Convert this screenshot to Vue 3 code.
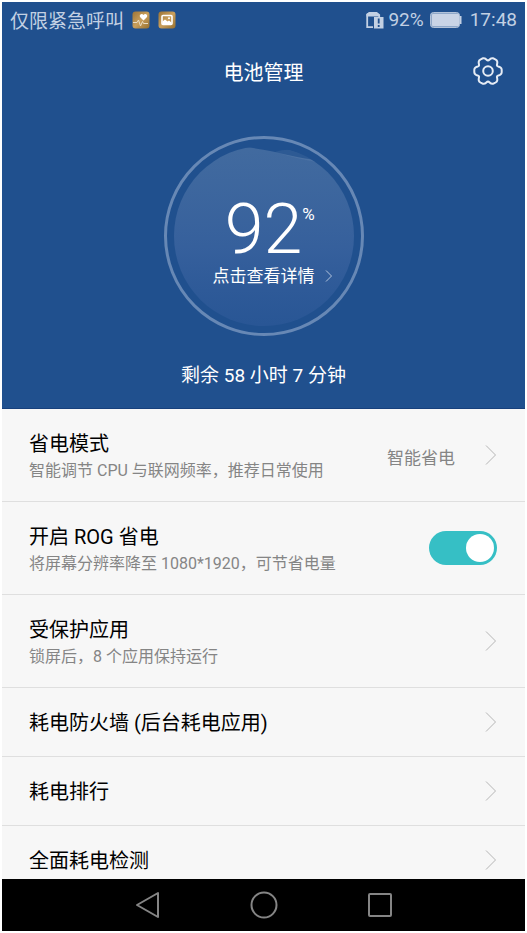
<script setup>
import { ref } from 'vue'

const level = ref(92)
const rogSaving = ref(true)

const rows = [
  { id: 'mode', title: '省电模式', note: '智能调节 CPU 与联网频率，推荐日常使用', value: '智能省电' },
  { id: 'rog', title: '开启 ROG 省电', note: '将屏幕分辨率降至 1080*1920，可节省电量', toggle: true },
  { id: 'protected', title: '受保护应用', note: '锁屏后，8 个应用保持运行' },
  { id: 'firewall', title: '耗电防火墙 (后台耗电应用)' },
  { id: 'ranking', title: '耗电排行' },
  { id: 'check', title: '全面耗电检测' },
]

// Six-lobed outline for the settings icon: broad lobes, narrow notches
function gearPath(cx, cy) {
  const points = []
  for (let deg = 0; deg < 360; deg += 3) {
    const a = (deg * Math.PI) / 180
    const r = 12.6 + 1.6 * Math.cos(6 * a) - 0.5 * Math.cos(12 * a)
    points.push(`${(cx + r * Math.cos(a)).toFixed(2)} ${(cy + r * Math.sin(a)).toFixed(2)}`)
  }
  return `M${points.join('L')}Z`
}
const gear = gearPath(16, 16)
</script>

<template>
  <div class="screen">
    <section class="hero">
      <div class="status">
        <span class="carrier">仅限紧急呼叫</span>
        <svg class="app-icon" width="18" height="18" viewBox="0 0 18 18" aria-hidden="true">
          <defs>
            <linearGradient id="gold" x1="0" y1="0" x2="1" y2="1">
              <stop offset="0" stop-color="#9c7436" />
              <stop offset="0.5" stop-color="#c99f5c" />
              <stop offset="1" stop-color="#96702f" />
            </linearGradient>
          </defs>
          <rect x="0.5" y="0.5" width="17" height="17" rx="3" fill="url(#gold)" />
          <path d="M11.5 9.5 8 6C6.8 4 9.8 1.800 11.500 4 13.200 1.800 16.200 4 15 6Z" fill="#fff" />
          <path d="M1 11.5H5L6.5 9 8.5 15 10.5 10.5 11.5 12.5H16" fill="none" stroke="#eadcc2" stroke-width="1" />
        </svg>
        <svg class="app-icon" width="18" height="18" viewBox="0 0 18 18" aria-hidden="true">
          <rect x="0.5" y="0.5" width="17" height="17" rx="3" fill="url(#gold)" />
          <rect x="4" y="4.5" width="10" height="9" rx="1" fill="none" stroke="#fff" stroke-width="1.6" />
          <path d="M4.5 12V10.5L7 8.5 9.5 10.5 11 9.5 13.5 11.5V13H4.5Z" fill="#fff" />
          <circle cx="11" cy="7.3" r="1" fill="#fff" />
        </svg>
        <span class="spacer"></span>
        <svg width="19" height="20" viewBox="0 0 19 20" aria-hidden="true">
          <path d="M8 17.200H2.200V4.500L4.500 3H11.500L14.200 5V7" fill="none" stroke="#c3d0e3" stroke-width="1.800" />
          <path d="M1.500 6.500V4L4.500 2H11.500L14 4.500V6.500Z" fill="#c3d0e3" />
          <rect x="9" y="7" width="9.500" height="11.500" fill="#c3d0e3" />
          <path d="M13.700 8.500V13.500M13.700 15V17" stroke="#20508e" stroke-width="1.800" />
        </svg>
        <span class="percent">{{ level }}%</span>
        <svg class="battery" width="32" height="16" viewBox="0 0 32 16" aria-hidden="true">
          <rect x="0.5" y="0.5" width="29" height="15" rx="3" fill="#8fa8c9" stroke="#b3c3da" />
          <rect x="2" y="2" width="27" height="12" rx="1" fill="#c9d4e6" />
          <path d="M30 4H31.5V12H30Z" fill="#c3d0e3" />
        </svg>
        <time>17:48</time>
      </div>

      <header class="bar">
        <h1>电池管理</h1>
        <button class="settings" type="button" aria-label="设置">
          <svg width="32" height="32" viewBox="0 0 32 32" fill="none" stroke="#e6ecf5" stroke-width="2" stroke-linejoin="round">
            <path :d="gear" />
            <circle cx="16" cy="16" r="4.8" />
          </svg>
        </button>
      </header>

      <button class="gauge" type="button">
        <svg class="dial" viewBox="0 0 200 200" aria-hidden="true">
          <defs>
            <linearGradient id="water" x1="0" y1="0" x2="0" y2="1">
              <stop offset="0" stop-color="#fff" stop-opacity="0.15" />
              <stop offset="0.55" stop-color="#9dabe0" stop-opacity="0.17" />
              <stop offset="1" stop-color="#6b82cc" stop-opacity="0.1" />
            </linearGradient>
            <clipPath id="bowl"><circle cx="100" cy="100" r="90" /></clipPath>
          </defs>
          <circle cx="100" cy="100" r="98.5" fill="none" stroke="#6788b5" stroke-width="3" />
          <g clip-path="url(#bowl)">
            <path d="M111 16Q121 13 126 14 140 17 152 26Q130 22 111 16Z" fill="#fff" opacity="0.06" />
            <path d="M0 30Q60 12 84 11.500Q92 12 111 16 130 21 152 24L200 45V200H0Z" fill="url(#water)" />
          </g>
        </svg>
        <span class="reading"><span class="number">{{ level }}</span><span class="unit">%</span></span>
        <span class="detail">
          <span class="detail-text">点击查看详情</span>
          <svg width="8" height="14" viewBox="0 0 8 14" fill="none" stroke="#b4c4dd" aria-hidden="true">
            <path d="M1 1.500 6.500 7 1 12.500" />
          </svg>
        </span>
      </button>

      <p class="remaining">剩余 58 小时 7 分钟</p>
    </section>

    <ul class="list">
      <li v-for="row in rows" :key="row.id">
        <component :is="row.toggle ? 'label' : 'button'" class="row" :type="row.toggle ? null : 'button'">
          <span class="text">
            <span class="title">{{ row.title }}</span>
            <span v-if="row.note" class="note">{{ row.note }}</span>
          </span>
          <span v-if="row.value" class="value">{{ row.value }}</span>
          <input v-if="row.toggle" v-model="rogSaving" class="switch" type="checkbox" role="switch" />
          <svg v-else class="chevron" width="12" height="20" viewBox="0 0 12 20" fill="none" stroke="#b5b5b5" aria-hidden="true">
            <path d="M1 .500 10.500 10 1 19.500" />
          </svg>
        </component>
      </li>
    </ul>

    <nav class="nav">
      <button type="button" aria-label="返回">
        <svg width="28" height="30" viewBox="0 0 28 30"><path d="M24 3V27L3 15Z" /></svg>
      </button>
      <button type="button" aria-label="主屏幕">
        <svg width="28" height="30" viewBox="0 0 28 30"><circle cx="14" cy="15" r="12.500" /></svg>
      </button>
      <button type="button" aria-label="最近任务">
        <svg width="28" height="30" viewBox="0 0 28 30"><rect x="3" y="4" width="22" height="22" rx="1" /></svg>
      </button>
    </nav>
  </div>
</template>

<style>
body {
  background: #fff;
}
</style>

<style scoped>
.screen {
  box-sizing: border-box;
  height: 100vh;
  padding: 2px;
  display: flex;
  flex-direction: column;
  font-family: Roboto, "Noto Sans CJK SC", sans-serif;
}
button {
  margin: 0;
  padding: 0;
  border: 0;
  background: none;
  color: inherit;
  font: inherit;
}
svg {
  display: block;
  flex: none;
}
.hero {
  flex: none;
  display: flex;
  flex-direction: column;
  align-items: center;
  background: #20508e;
  border-bottom: 1px solid #17407c;
  color: #fff;
}
.status {
  box-sizing: border-box;
  width: 100%;
  height: 35px;
  padding: 0 8px;
  display: flex;
  align-items: center;
  color: #c3d0e3;
  font-size: 19px;
}
.app-icon {
  margin-left: 8px;
}
.spacer {
  flex: 1;
}
.percent {
  margin: 0 6px 0 4px;
}
.battery {
  margin-right: 8px;
}
.bar {
  width: 100%;
  height: 68px;
  display: grid;
  grid-template-columns: 1fr auto 1fr;
  align-items: center;
}
h1 {
  grid-column: 2;
  margin: 0;
  font-size: 20px;
  font-weight: 400;
}
.settings {
  justify-self: end;
  margin-right: 21px;
}
.gauge {
  position: relative;
  width: 200px;
  height: 200px;
  margin-top: 31px;
  display: flex;
  flex-direction: column;
}
.dial {
  position: absolute;
  inset: 0;
}
.reading,
.detail {
  position: relative;
  width: 100%;
  display: grid;
  grid-template-columns: 1fr auto 1fr;
}
.reading {
  margin-top: 58px;
}
.number {
  grid-column: 2;
  font-size: 70px;
  font-weight: 300;
  line-height: 70px;
}
.unit {
  justify-self: start;
  font-size: 17px;
  line-height: 40px;
}
.detail {
  align-items: center;
  line-height: 24px;
}
.detail-text {
  grid-column: 2;
  margin-right: 10px;
  padding-left: 10px;
  font-size: 17px;
}
.remaining {
  margin: 26px 0 18px;
  font-size: 19px;
  line-height: 28px;
}
.list {
  flex: 1 1 0;
  min-height: 0;
  margin: 0;
  padding: 0;
  overflow: hidden;
  list-style: none;
  background: #f7f7f7;
}
li {
  border-bottom: 1px solid #dfdfdf;
}
.row {
  box-sizing: border-box;
  width: 100%;
  padding: 20px 28px 18px 27px;
  display: flex;
  align-items: center;
  text-align: left;
}
.text {
  flex: 1;
  display: flex;
  flex-direction: column;
}
.title {
  color: #000;
  font-size: 20px;
  line-height: 30px;
}
.note {
  color: #858585;
  font-size: 16px;
  line-height: 24px;
}
.value {
  margin-right: 30px;
  color: #858585;
  font-size: 17px;
}
.chevron,
.switch {
  margin: 0 0 2px;
}
.switch {
  appearance: none;
  box-sizing: border-box;
  width: 68px;
  height: 34px;
  padding: 3px;
  display: flex;
  border-radius: 17px;
  background: #b8b8b8;
}
.switch::before {
  content: "";
  width: 28px;
  height: 28px;
  border-radius: 50%;
  background: #fff;
}
.switch:checked {
  justify-content: flex-end;
  background: #36bfc5;
}
.nav {
  flex: none;
  height: 52px;
  display: flex;
  align-items: center;
  justify-content: center;
  gap: 88px;
  background: #000;
}
.nav svg {
  fill: none;
  stroke: #858585;
  stroke-width: 2;
  stroke-linejoin: round;
}
</style>
